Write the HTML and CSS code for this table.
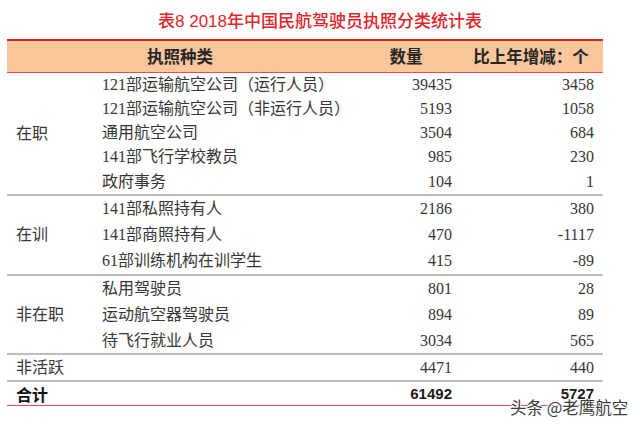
FILE: index.html
```html
<!DOCTYPE html>
<html lang="zh-CN">
<head>
<meta charset="utf-8">
<title>表8 2018年中国民航驾驶员执照分类统计表</title>
<link rel="stylesheet" href="styles.css">
</head>
<body>
<div class="page">
  <h1 class="title">表8 2018年中国民航驾驶员执照分类统计表</h1>
  <table class="stats">
    <colgroup>
      <col class="c-cat"><col class="c-item"><col class="c-num"><col class="c-diff">
    </colgroup>
    <thead>
      <tr>
        <th colspan="2">执照种类</th>
        <th>数量</th>
        <th>比上年增减：个</th>
      </tr>
    </thead>
    <tbody class="g1">
      <tr class="h24"><td class="cat" rowspan="5">在职</td><td class="item">121部运输航空公司（运行人员）</td><td class="num">39435</td><td class="diff">3458</td></tr>
      <tr class="h24"><td class="item">121部运输航空公司（非运行人员）</td><td class="num">5193</td><td class="diff">1058</td></tr>
      <tr class="h24"><td class="item">通用航空公司</td><td class="num">3504</td><td class="diff">684</td></tr>
      <tr class="h24"><td class="item">141部飞行学校教员</td><td class="num">985</td><td class="diff">230</td></tr>
      <tr class="h25"><td class="item">政府事务</td><td class="num">104</td><td class="diff">1</td></tr>
    </tbody>
    <tbody class="grp">
      <tr class="h26 first"><td class="cat" rowspan="3">在训</td><td class="item">141部私照持有人</td><td class="num">2186</td><td class="diff">380</td></tr>
      <tr class="h26"><td class="item">141部商照持有人</td><td class="num">470</td><td class="diff">-1117</td></tr>
      <tr class="h26"><td class="item">61部训练机构在训学生</td><td class="num">415</td><td class="diff">-89</td></tr>
    </tbody>
    <tbody class="grp">
      <tr class="h26 first"><td class="cat" rowspan="3">非在职</td><td class="item">私用驾驶员</td><td class="num">801</td><td class="diff">28</td></tr>
      <tr class="h26"><td class="item">运动航空器驾驶员</td><td class="num">894</td><td class="diff">89</td></tr>
      <tr class="h25"><td class="item">待飞行就业人员</td><td class="num">3034</td><td class="diff">565</td></tr>
    </tbody>
    <tbody class="grp">
      <tr class="h25 first"><td class="cat">非活跃</td><td class="item"></td><td class="num">4471</td><td class="diff">440</td></tr>
    </tbody>
    <tbody class="grp total">
      <tr class="h24 first"><td class="cat">合计</td><td class="item"></td><td class="num">61492</td><td class="diff">5727</td></tr>
    </tbody>
  </table>
  <div class="watermark">头条 @老鹰航空</div>
</div>
</body>
</html>
```

FILE: styles.css
```css
html, body {
  margin: 0;
  padding: 0;
  background: #ffffff;
}

.page {
  position: relative;
  width: 640px;
  height: 427px;
  overflow: hidden;
  font-family: "Liberation Serif", "Noto Sans CJK SC", serif;
  color: #363636;
}

.title {
  margin: 0;
  padding-top: 5px;
  height: 34px;
  line-height: 34px;
  text-align: center;
  font-family: "Liberation Sans", "Noto Sans CJK SC", sans-serif;
  font-size: 17px;
  font-weight: 500;
  color: #e3242b;
}

.stats {
  margin-left: 7px;
  width: 596px;
  border-collapse: separate;
  border-spacing: 0;
  table-layout: fixed;
  font-size: 16px;
}

.c-cat { width: 88px; }
.c-item { width: 258px; }
.c-num { width: 106px; }
.c-diff { width: 144px; }

.stats th {
  height: 31px;
  padding: 0;
  background: #fac69b;
  border-top: 2px solid #d8261f;
  border-bottom: 1px solid #e0504a;
  font-family: "Noto Sans CJK SC", sans-serif;
  font-size: 16.5px;
  font-weight: 700;
  color: #262626;
  text-align: center;
  line-height: 31px;
}

.stats td {
  padding: 0;
  line-height: 20px;
  white-space: nowrap;
}

.h24 { height: 24px; }
.h25 { height: 25px; }
.h26 { height: 26px; }
.first { height: 28px; }
.h25.first { height: 27px; }
.h24.first { height: 26px; }

.grp .first td,
.grp td.cat {
  border-top: 2px solid #bdbdbd;
}

.cat {
  padding-left: 9px !important;
  vertical-align: middle;
}

.item {
  padding-left: 7px !important;
}

.num {
  text-align: right;
  padding-right: 7px !important;
}

.diff {
  text-align: right;
  padding-right: 9px !important;
}

.total td {
  border-bottom: 1px solid #e5475c;
}

.total .cat {
  font-family: "Noto Sans CJK SC", sans-serif;
  font-weight: 700;
  color: #111111;
}

.total .num,
.total .diff {
  font-family: "Liberation Sans", sans-serif;
  font-size: 15px;
  font-weight: 700;
  color: #1a1a1a;
}

.watermark {
  position: absolute;
  left: 510px;
  top: 396px;
  font-family: "Noto Sans CJK SC", sans-serif;
  font-size: 16.5px;
  line-height: 22px;
  color: #3c3c3c;
  text-shadow: -1px 0 #fff, 1px 0 #fff, 0 -1px #fff, 0 1px #fff, 0 0 2px #fff;
  white-space: nowrap;
}
```
